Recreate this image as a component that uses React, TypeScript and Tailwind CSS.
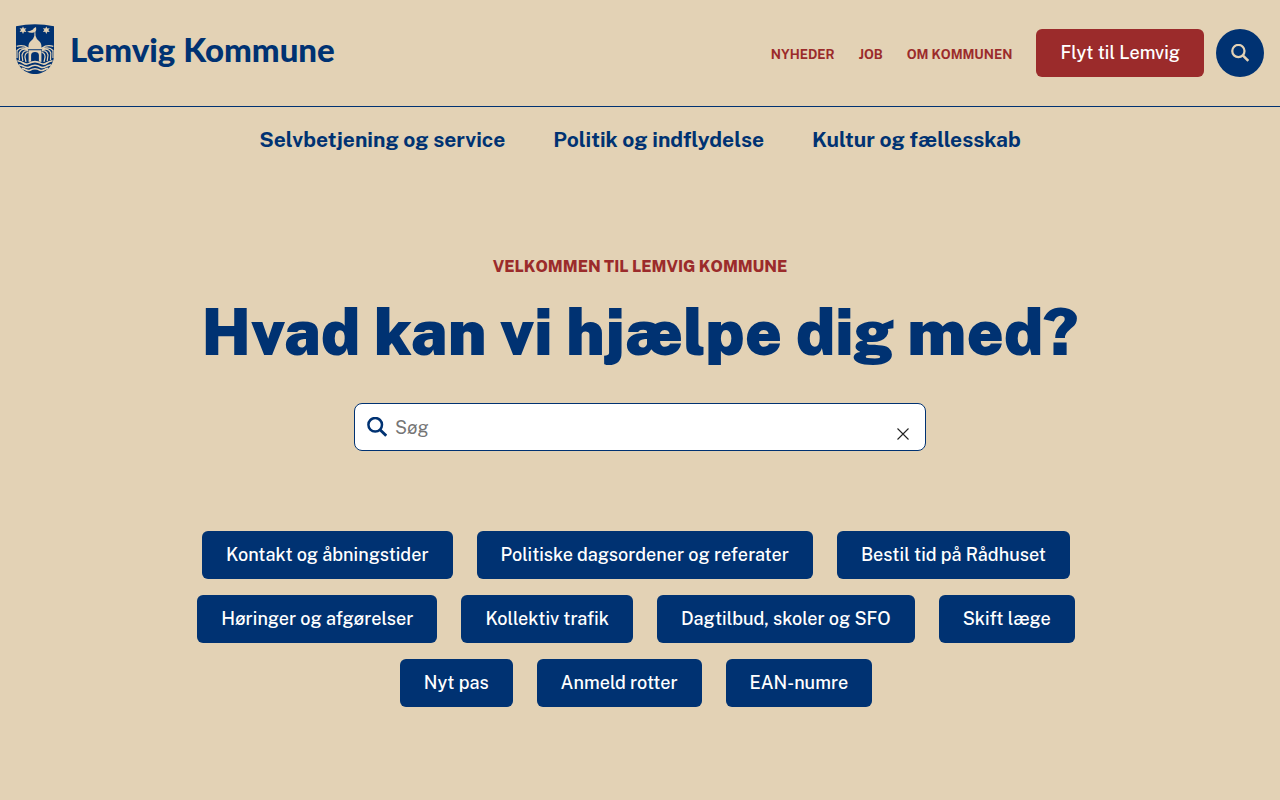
import { useState } from 'react';

const topLinks = ['Nyheder', 'Job', 'Om kommunen'];
const mainLinks = ['Selvbetjening og service', 'Politik og indflydelse', 'Kultur og fællesskab'];
const shortcuts = [
  'Kontakt og åbningstider',
  'Politiske dagsordener og referater',
  'Bestil tid på Rådhuset',
  'Høringer og afgørelser',
  'Kollektiv trafik',
  'Dagtilbud, skoler og SFO',
  'Skift læge',
  'Nyt pas',
  'Anmeld rotter',
  'EAN-numre',
];

function SearchIcon({ className }: { className: string }) {
  return (
    <svg viewBox="0 0 20 20" fill="none" stroke="currentColor" strokeWidth="2.5" className={className} aria-hidden="true">
      <circle cx="8.2" cy="7.8" r="6.8" />
      <path d="M12.8 12.4 19.2 18.8" strokeWidth="2.8" />
    </svg>
  );
}

function Crest() {
  return (
    <svg viewBox="0 0 38 50" className="h-[50px] w-[38px] shrink-0" aria-hidden="true">
      <path d="M0 2.2Q19-1.6 38 2.2V31C38 42 29 50 19 50S0 42 0 31Z" fill="#003272" />
      <g fill="#e3d2b5">
        {/* stars */}
        <path d="M7 2.4 8 4.6 10.4 4.3 9 6.1 10.4 8 8 7.7 7 9.9 6 7.7 3.6 8 5 6.1 3.6 4.3 6 4.6Z" />
        <path d="M30.3 2.4 31.3 4.6 33.7 4.3 32.3 6.1 33.7 8 31.3 7.7 30.3 9.9 29.3 7.7 26.9 8 28.3 6.1 26.9 4.3 29.3 4.6Z" />
        {/* weather vane, dome and tower */}
        <path d="M11 7.4Q14.5 7.6 17 5.6L17.8 4.2 20 3 20.2 5Q20.4 7.6 17.6 8.4 14 9.2 11 7.4Z" />
        <path d="M18.5 7H19.3L19.6 12Q20.2 14.6 23 17.1 25.8 19.5 25.4 23.5H26V25.2H12V23.5H12.5Q12.1 19.5 14.9 17.1 17.8 14.6 18.3 12Z" />
        <path d="M12.6 26.2H25.4V38L22.9 37.4V31Q22.7 28 19 28T15.1 31V37.4L12.6 38Z" />
      </g>
      {/* jets of water on both sides */}
      <g fill="none" stroke="#e3d2b5" strokeWidth="1.2">
        <path d="M12 24Q7 20.4.7 22.4M12 25Q5 22 1 26.5V34M12 26Q6 23.4 3.2 29L3.5 36M12.2 27Q7.6 25.6 6 31L6.8 37M12.4 28.5Q9.2 28.5 8.9 33L10 38" />
        <path d="M26 24Q31 20.4 37.3 22.4M26 25Q33 22 37 26.5V34M26 26Q32 23.4 34.8 29L34.5 36M25.8 27Q30.4 25.6 32 31L31.2 37M25.6 28.5Q28.8 28.5 29.1 33L28 38" />
      </g>
      {/* waves */}
      <g fill="none" stroke="#e3d2b5" strokeWidth="1.6">
        <path d="M1.4 36.8Q5 37.5 7.4 39 10 41 13 39.4 19 35.8 25 39.4 28 41 30.6 39 33 37.5 36.6 36.8" />
        <path d="M2.8 40.7Q6 41.2 8.2 42.6 11 44.2 13.5 43 19 39.4 24.5 43 27 44.2 29.8 42.6 32 41.2 35.2 40.7" />
        <path d="M5.7 44.4Q8.3 44.7 10 45.8 12 47 14 46.2 19 43.4 24 46.2 26 47 28 45.8 29.7 44.7 32.3 44.4" />
      </g>
    </svg>
  );
}

export default function App() {
  const [query, setQuery] = useState('');

  return (
    <div className="min-h-screen bg-[#e3d2b5] font-['Public_Sans',Inter,sans-serif] text-[#003272]">
      <header>
        <div className="flex items-center justify-between border-b border-[#003272] px-4 py-6">
          <a href="/" className="flex items-center gap-4 pb-2">
            <Crest />
            <span className="font-[Lato,sans-serif] text-[33px] leading-[50px] font-black whitespace-nowrap">Lemvig Kommune</span>
          </a>
          <div className="flex items-center gap-6">
            <nav className="flex gap-6 pt-1">
              {topLinks.map((label) => (
                <a key={label} href="#" className="text-[13px] leading-5 font-bold whitespace-nowrap text-[#9b2b2b] uppercase">{label}</a>
              ))}
            </nav>
            <div className="flex items-center gap-3">
              <a href="#" className="rounded-md bg-[#9b2b2b] px-6 py-3 text-lg leading-6 font-medium whitespace-nowrap text-white">Flyt til Lemvig</a>
              <button type="button" aria-label="Søg" className="flex size-12 items-center justify-center rounded-full bg-[#003272] text-[#e3d2b5]">
                <SearchIcon className="size-[18px]" />
              </button>
            </div>
          </div>
        </div>
        <nav className="flex justify-center gap-12 pt-[19px] pb-5">
          {mainLinks.map((label) => (
            <a key={label} href="#" className="text-[21px] leading-7 font-bold whitespace-nowrap">{label}</a>
          ))}
        </nav>
      </header>

      <main className="flex flex-col items-center px-4 pt-[81px] pb-16">
        <p className="text-base leading-6 font-extrabold text-[#9b2b2b] uppercase">Velkommen til Lemvig Kommune</p>
        <h1 className="mt-[13px] text-center text-[64px] leading-20 font-black">Hvad kan vi hjælpe dig med?</h1>

        <form role="search" onSubmit={(e) => e.preventDefault()} className="mt-[31px] flex h-12 w-full max-w-[572px] items-center rounded-lg border border-[#003272] bg-white pr-4 pl-3">
          <SearchIcon className="size-5 shrink-0" />
          <input
            type="text"
            aria-label="Søg"
            placeholder="Søg"
            value={query}
            onChange={(e) => setQuery(e.target.value)}
            className="h-full min-w-0 flex-1 bg-transparent px-2 text-lg outline-none placeholder:text-[#757575]"
          />
          <button type="button" aria-label="Ryd" onClick={() => setQuery('')} className="mt-3.5 text-[#222]">
            <svg viewBox="0 0 12 12" className="size-3" fill="none" stroke="currentColor" strokeWidth="1.1" aria-hidden="true">
              <path d="M.5.5l11 11M11.5.5l-11 11" />
            </svg>
          </button>
        </form>

        <div className="mt-20 flex max-w-[960px] flex-wrap justify-center gap-x-6 gap-y-4 pr-2">
          {shortcuts.map((label) => (
            <a key={label} href="#" className="rounded-md bg-[#003272] px-6 py-3 text-lg leading-6 font-medium whitespace-nowrap text-white">{label}</a>
          ))}
        </div>
      </main>
    </div>
  );
}
